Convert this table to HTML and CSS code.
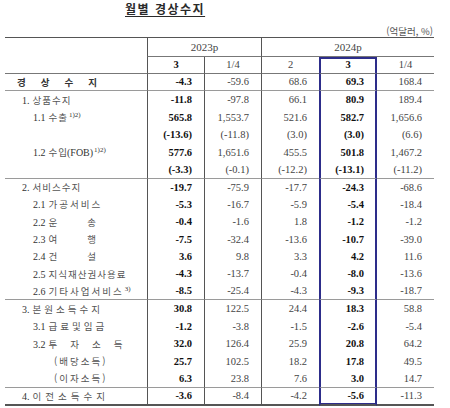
FILE: index.html
```html
<!DOCTYPE html>
<html lang="ko">
<head>
<meta charset="utf-8">
<link rel="stylesheet" href="styles.css">
</head>
<body>
<div class="title"><span>월별 경상수지</span></div>
<div class="unit">(억달러, %)</div>
<table class="bop">
  <colgroup>
    <col class="c-lab"><col class="c-n"><col class="c-n"><col class="c-n2"><col class="c-n2"><col class="c-n">
  </colgroup>
  <thead>
    <tr class="hr1">
      <th class="lab-h" rowspan="2"></th>
      <th class="yr v" colspan="2">2023p</th>
      <th class="yr v" colspan="3">2024p</th>
    </tr>
    <tr class="hr2">
      <th class="v b">3</th>
      <th class="v">1/4</th>
      <th class="v">2</th>
      <th class="hl hl-top b">3</th>
      <th class="nl">1/4</th>
    </tr>
  </thead>
  <tbody>
    <tr class="g">
      <td class="lab l0"><span class="k bold ls15">경상수지</span></td>
      <td class="v b">-4.3</td><td class="v">-59.6</td><td class="v">68.6</td><td class="hl b">69.3</td><td class="nl">168.4</td>
    </tr>
    <tr class="t">
      <td class="lab l1"><span class="n">1.</span><span class="k ls1">상품수지</span></td>
      <td class="v b">-11.8</td><td class="v">-97.8</td><td class="v">66.1</td><td class="hl b">80.9</td><td class="nl">189.4</td>
    </tr>
    <tr>
      <td class="lab l2"><span class="n">1.1</span><span class="k ls1">수출</span><sup>1)2)</sup></td>
      <td class="v b">565.8</td><td class="v">1,553.7</td><td class="v">521.6</td><td class="hl b">582.7</td><td class="nl">1,656.6</td>
    </tr>
    <tr class="t">
      <td class="lab"></td>
      <td class="v b">(-13.6)</td><td class="v">(-11.8)</td><td class="v">(3.0)</td><td class="hl b">(3.0)</td><td class="nl">(6.6)</td>
    </tr>
    <tr>
      <td class="lab l2"><span class="n">1.2</span><span class="k ls1">수입</span><span class="n fob">(FOB)</span><sup>1)2)</sup></td>
      <td class="v b">577.6</td><td class="v">1,651.6</td><td class="v">455.5</td><td class="hl b">501.8</td><td class="nl">1,467.2</td>
    </tr>
    <tr class="t g">
      <td class="lab"></td>
      <td class="v b">(-3.3)</td><td class="v">(-0.1)</td><td class="v">(-12.2)</td><td class="hl b">(-13.1)</td><td class="nl">(-11.2)</td>
    </tr>
    <tr>
      <td class="lab l1"><span class="n">2.</span><span class="k ls1">서비스수지</span></td>
      <td class="v b">-19.7</td><td class="v">-75.9</td><td class="v">-17.7</td><td class="hl b">-24.3</td><td class="nl">-68.6</td>
    </tr>
    <tr>
      <td class="lab l2"><span class="n">2.1</span><span class="k ls2">가공서비스</span></td>
      <td class="v b">-5.3</td><td class="v">-16.7</td><td class="v">-5.9</td><td class="hl b">-5.4</td><td class="nl">-18.4</td>
    </tr>
    <tr class="t">
      <td class="lab l2"><span class="n">2.2</span><span class="k ls30">운송</span></td>
      <td class="v b">-0.4</td><td class="v">-1.6</td><td class="v">1.8</td><td class="hl b">-1.2</td><td class="nl">-1.2</td>
    </tr>
    <tr>
      <td class="lab l2"><span class="n">2.3</span><span class="k ls30">여행</span></td>
      <td class="v b">-7.5</td><td class="v">-32.4</td><td class="v">-13.6</td><td class="hl b">-10.7</td><td class="nl">-39.0</td>
    </tr>
    <tr>
      <td class="lab l2"><span class="n">2.4</span><span class="k ls30">건설</span></td>
      <td class="v b">3.6</td><td class="v">9.8</td><td class="v">3.3</td><td class="hl b">4.2</td><td class="nl">11.6</td>
    </tr>
    <tr class="t">
      <td class="lab l2"><span class="n">2.5</span><span class="k ls1">지식재산권사용료</span></td>
      <td class="v b">-4.3</td><td class="v">-13.7</td><td class="v">-0.4</td><td class="hl b">-8.0</td><td class="nl">-13.6</td>
    </tr>
    <tr class="g">
      <td class="lab l2"><span class="n">2.6</span><span class="k ls2">기타사업서비스</span><sup>3)</sup></td>
      <td class="v b">-8.5</td><td class="v">-25.4</td><td class="v">-4.3</td><td class="hl b">-9.3</td><td class="nl">-18.7</td>
    </tr>
    <tr class="t">
      <td class="lab l1"><span class="n">3.</span><span class="k ls3">본원소득수지</span></td>
      <td class="v b">30.8</td><td class="v">122.5</td><td class="v">24.4</td><td class="hl b">18.3</td><td class="nl">58.8</td>
    </tr>
    <tr>
      <td class="lab l2"><span class="n">3.1</span><span class="k ls3">급료및임금</span></td>
      <td class="v b">-1.2</td><td class="v">-3.8</td><td class="v">-1.5</td><td class="hl b">-2.6</td><td class="nl">-5.4</td>
    </tr>
    <tr class="t">
      <td class="lab l2"><span class="n">3.2</span><span class="k ls13">투자소득</span></td>
      <td class="v b">32.0</td><td class="v">126.4</td><td class="v">25.9</td><td class="hl b">20.8</td><td class="nl">64.2</td>
    </tr>
    <tr>
      <td class="lab l3"><span class="k ls2">(배당소득)</span></td>
      <td class="v b">25.7</td><td class="v">102.5</td><td class="v">18.2</td><td class="hl b">17.8</td><td class="nl">49.5</td>
    </tr>
    <tr class="t g">
      <td class="lab l3"><span class="k ls2">(이자소득)</span></td>
      <td class="v b">6.3</td><td class="v">23.8</td><td class="v">7.6</td><td class="hl b">3.0</td><td class="nl">14.7</td>
    </tr>
    <tr class="last">
      <td class="lab l1"><span class="n">4.</span><span class="k ls4">이전소득수지</span></td>
      <td class="v b">-3.6</td><td class="v">-8.4</td><td class="v">-4.2</td><td class="hl b">-5.6</td><td class="nl">-11.3</td>
    </tr>
  </tbody>
</table>
</body>
</html>
```
FILE: styles.css
```css
html, body {
  margin: 0;
  padding: 0;
  background: #fff;
}
body {
  width: 450px;
  height: 408px;
  overflow: hidden;
  font-family: "Liberation Serif", "Noto Sans CJK KR", serif;
  color: #222;
}
.title {
  margin-left: 125px;
  padding-top: 1px;
  height: 15px;
  font-family: "Noto Sans CJK KR", sans-serif;
  font-weight: bold;
  font-size: 12px;
  line-height: 15px;
  letter-spacing: 1.5px;
  color: #2a2a2a;
}
.title span {
  text-decoration: underline;
  text-decoration-thickness: 1px;
  text-underline-offset: 2px;
}
.unit {
  margin: 9px 17px 0 0;
  height: 12px;
  font-family: "Noto Sans CJK KR", sans-serif;
  font-size: 9.5px;
  line-height: 12px;
  text-align: right;
  color: #555;
}
.bop {
  margin-left: 5px;
  width: 429px;
  border-collapse: separate;
  border-spacing: 0;
  table-layout: fixed;
}
.c-lab { width: 142px; }
.c-n { width: 57px; }
.c-n2 { width: 58px; }

th, td {
  padding: 0 12px 0 0;
  font-size: 10.5px;
  line-height: 12px;
  white-space: nowrap;
  vertical-align: middle;
  color: #444;
  font-weight: normal;
}
td { text-align: right; }
th { text-align: center; padding: 0; }

.hr1 { height: 20px; }
.hr2 { height: 17px; }
.hr1 th { border-top: 1px solid #555; }
.hr1 th.yr { border-bottom: 1px solid #777; font-size: 11px; }
.lab-h { border-bottom: 1px solid #777; }
.hr2 th { border-bottom: 1px solid #777; }

.v { border-left: 1px solid #555; }
.hl {
  border-left: 2px solid #2d2d8a;
  border-right: 2px solid #2d2d8a;
  padding-right: 11px;
}
th.hl { padding-right: 0; }
.hl-top { box-shadow: inset 0 2px 0 #2d2d8a; }
.b { font-weight: bold; color: #111; }

tbody tr { height: 17px; }
tbody tr.t { height: 18px; }
tr.g td { border-bottom: 1px solid #9a9a9a; }
tr.last { height: 18px; }
tr.last td { border-bottom: 2px solid #555; }
tr.last td.hl { box-shadow: inset 0 -1px 0 #2d2d8a; }

td.lab {
  text-align: left;
  padding: 0;
  color: #555;
}
.l0 { padding-left: 12px !important; }
.l1 { padding-left: 17px !important; }
.l2 { padding-left: 28px !important; }
.l3 { padding-left: 49px !important; }

.lab .n {
  font-family: "Liberation Serif", serif;
  font-size: 10px;
  color: #333;
  margin-right: 3px;
}
.lab .n.fob { margin: 0 0 0 -1px; letter-spacing: 0; }
.lab .k {
  font-family: "Noto Sans CJK KR", sans-serif;
  font-size: 9.5px;
}
.lab .bold { font-weight: bold; color: #333; }
.ls1 { letter-spacing: 1px; }
.ls2 { letter-spacing: 2px; }
.ls3 { letter-spacing: 3px; }
.ls4 { letter-spacing: 4px; }
.ls13 { letter-spacing: 13px; }
.ls15 { letter-spacing: 15px; }
.ls30 { letter-spacing: 30px; }
.lab sup {
  font-family: "Liberation Serif", serif;
  font-size: 7px;
  line-height: 0;
  vertical-align: 4px;
  color: #333;
  margin-left: 1px;
}
```
